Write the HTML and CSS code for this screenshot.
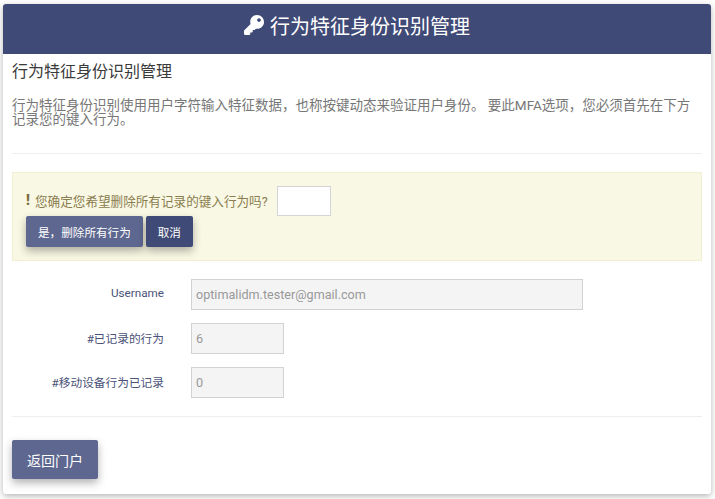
FILE: index.html
```html
<!DOCTYPE html>
<html lang="zh">
<head>
	<meta charset="UTF-8">
	<title>行为特征身份识别管理</title>
	<link rel="stylesheet" href="styles.css">
</head>
<body>
	<div class="card">
		<div class="card__header">
			<svg class="key-icon" viewBox="0 0 512 512" width="20" height="20"><path fill="#fff" d="M512 176c0 97-79 176-176 176-11 0-22-1-33-3l-24 27c-4 5-11 8-18 8h-37v40c0 13-11 24-24 24h-40v40c0 13-11 24-24 24H24c-13 0-24-11-24-24v-78c0-6 3-12 7-17l162-162c-6-18-9-37-9-55C160 79 239 0 336 0s176 79 176 176zM336 128c0 27 21 48 48 48s48-21 48-48-21-48-48-48-48 21-48 48z"/></svg>
			<span>行为特征身份识别管理</span>
		</div>
		<div class="card__body">
			<h4 class="title">行为特征身份识别管理</h4>
			<p class="intro">行为特征身份识别使用用户字符输入特征数据，也称按键动态来验证用户身份。 要此MFA选项，您必须首先在下方记录您的键入行为。</p>
			<hr class="divider divider--top">

			<div class="alert">
				<div class="alert__question">
					<span class="alert__mark">!</span>
					<span class="alert__text">您确定您希望删除所有记录的键入行为吗?</span>
					<input class="alert__input" type="text">
				</div>
				<div class="alert__actions">
					<button class="btn">是，删除所有行为</button>
					<button class="btn btn--dark">取消</button>
				</div>
			</div>

			<div class="form">
				<div class="form__row">
					<label class="form__label">Username</label>
					<input class="form__input form__input--wide" type="text" value="optimalidm.tester@gmail.com" disabled>
				</div>
				<div class="form__row">
					<label class="form__label">#已记录的行为</label>
					<input class="form__input" type="text" value="6" disabled>
				</div>
				<div class="form__row">
					<label class="form__label">#移动设备行为已记录</label>
					<input class="form__input" type="text" value="0" disabled>
				</div>
			</div>
			<hr class="divider divider--bottom">
			<button class="btn btn--back">返回门户</button>
		</div>
	</div>
</body>
</html>
```

FILE: styles.css
```css
* {
    margin: 0;
    padding: 0;
    box-sizing: border-box;
}

body {
    height: 499px;
    padding: 4px 4px 5px 3px;
    overflow: hidden;
    background: #fff;
    font-family: Roboto, "Noto Sans CJK SC", sans-serif;
}

.card {
    height: 490px;
    background: #fff;
    border-radius: 3px;
    box-shadow: 0 2px 6px rgba(0, 0, 0, 0.3);
}

.card__header {
    display: flex;
    justify-content: center;
    align-items: center;
    gap: 6px;
    height: 50px;
    padding-bottom: 8px;
    background: #3f4a77;
    border-radius: 3px 3px 0 0;
    color: #fff;
    font-size: 20px;
}

.card__body {
    padding: 9px 9px 0;
}

.title {
    font-size: 16px;
    font-weight: 400;
    line-height: 18px;
    color: #3a3a3a;
}

.intro {
    margin-top: 17px;
    font-size: 13.5px;
    line-height: 14px;
    color: #777;
}

.divider {
    border: none;
    border-top: 1px solid #eee;
}

.divider--top {
    margin-top: 27px;
}

.divider--bottom {
    margin-top: 18px;
}

.alert {
    height: 89px;
    margin-top: 18px;
    padding: 13px 13px 0;
    background: #f9f8e4;
    border: 1px solid #f2eed0;
}

.alert__question {
    display: flex;
    align-items: center;
    height: 30px;
    font-size: 12.6px;
    color: #8a7d4f;
}

.alert__mark {
    width: 9px;
    padding-bottom: 2px;
    font-weight: 900;
    font-size: 14px;
    color: #7a6c3a;
}

.alert__text {
    padding-bottom: 2px;
}

.alert__input {
    width: 54px;
    height: 30px;
    margin-left: 9px;
    background: #fff;
    border: 1px solid #d4d4d4;
}

.alert__actions {
    display: flex;
    gap: 3px;
}

.btn {
    height: 31px;
    padding: 0 12px;
    background: #5d6790;
    border: none;
    border-radius: 2px;
    color: #fff;
    font-family: inherit;
    font-size: 11.6px;
    box-shadow: 0 4px 8px rgba(0, 0, 0, 0.3);
}

.btn--dark {
    background: #3f4a77;
}

.btn--back {
    width: 86px;
    height: 39px;
    margin-top: 23px;
    font-size: 14px;
}

.form {
    margin-top: 18px;
}

.form__row {
    display: flex;
    align-items: center;
    margin-bottom: 13px;
}

.form__label {
    width: 152px;
    margin-right: 27px;
    padding-bottom: 3px;
    text-align: right;
    font-size: 11.7px;
    color: #4a5278;
}

.form__input {
    width: 93px;
    height: 31px;
    padding: 0 4px;
    background: #f4f4f4;
    border: 1px solid #d2d2d2;
    color: #999;
    font-family: inherit;
    font-size: 12.6px;
}

.form__input--wide {
    width: 392px;
}
```
